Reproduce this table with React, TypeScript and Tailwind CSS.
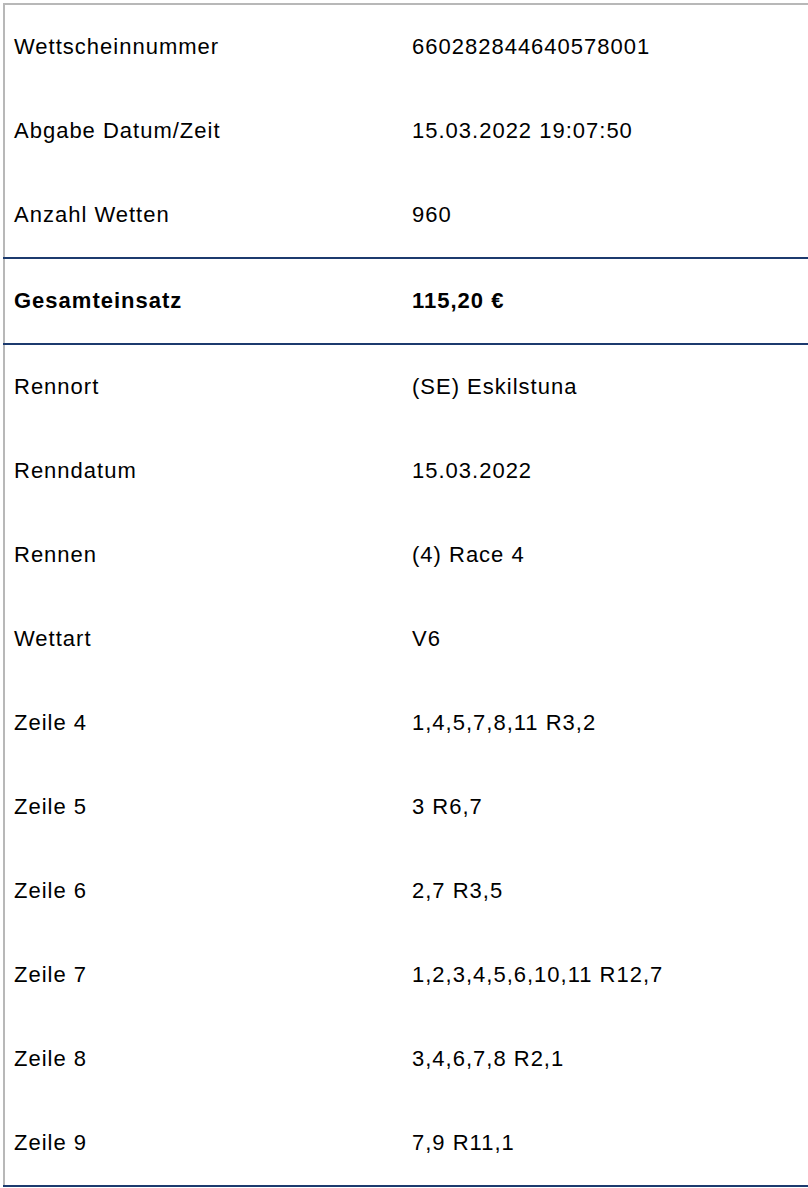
const top = [
  ['Wettscheinnummer', '660282844640578001'],
  ['Abgabe Datum/Zeit', '15.03.2022 19:07:50'],
  ['Anzahl Wetten', '960'],
];

const details = [
  ['Rennort', '(SE) Eskilstuna'],
  ['Renndatum', '15.03.2022'],
  ['Rennen', '(4) Race 4'],
  ['Wettart', 'V6'],
  ['Zeile 4', '1,4,5,7,8,11 R3,2'],
  ['Zeile 5', '3 R6,7'],
  ['Zeile 6', '2,7 R3,5'],
  ['Zeile 7', '1,2,3,4,5,6,10,11 R12,7'],
  ['Zeile 8', '3,4,6,7,8 R2,1'],
  ['Zeile 9', '7,9 R11,1'],
];

function Row({ label, value, bold }: { label: string; value: string; bold?: boolean }) {
  return (
    <div className={`grid grid-cols-[407px_1fr] h-[84px] items-center ${bold ? 'font-bold' : ''}`}>
      <div className="pl-[9px]">{label}</div>
      <div>{value}</div>
    </div>
  );
}

export default function App() {
  return (
    <div className="bg-white w-[808px] h-[1188px] pt-[3px] pl-[3px] text-[22px] leading-[24px] tracking-[1px] text-black" style={{ fontFamily: '"Liberation Sans", Arial, sans-serif' }}>
      <div className="border-t-2 border-l-2 border-[#b8b8b8]">
        {top.map(([l, v]) => <Row key={l} label={l} value={v} />)}
        <div className="border-y-2 border-[#1c3a6e] -ml-[2px] pl-[2px]">
          <Row label="Gesamteinsatz" value="115,20 €" bold />
        </div>
        {details.map(([l, v]) => <Row key={l} label={l} value={v} />)}
        <div className="h-[2px] bg-[#1c3a6e] -ml-[2px]" />
      </div>
    </div>
  );
}
